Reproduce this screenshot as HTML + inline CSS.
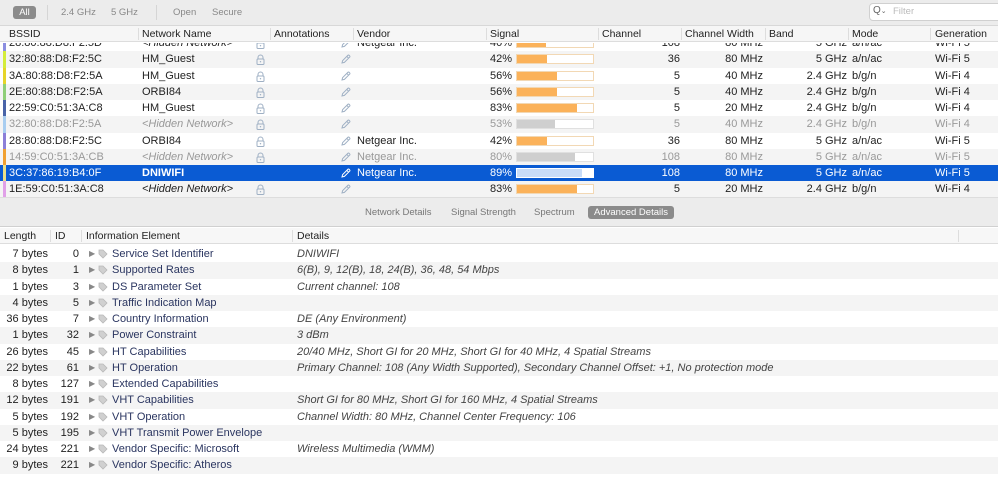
<!DOCTYPE html>
<html><head><meta charset="utf-8"><style>
*{margin:0;padding:0;box-sizing:border-box}
body{width:998px;height:482px;overflow:hidden;background:#fff;font-family:"Liberation Sans",sans-serif;font-size:11px;color:#222;position:relative}
.a{position:absolute;white-space:nowrap}
.tb{left:0;top:0;width:998px;height:26px;background:#ececec;border-bottom:1px solid #d8d8d8}
.hd{height:16px;background:#f6f6f6;border-bottom:1px solid #ddd;width:998px;left:0}
.hc{position:absolute;top:2px;font-size:10.5px;color:#222}
.sep{position:absolute;top:2px;width:1px;height:12px;background:#ddd}
.row{position:absolute;left:0;width:998px;height:16.25px}
.row span{position:absolute;top:2px}
.row svg{position:absolute}
.g{background:#f4f4f4}
.dim{color:#999}
.sel{background:#0a5bd3;color:#fff}
.bar{position:absolute;left:516px;top:3px;width:78px;height:10px;border:1px solid #f2d8b4;background:#fff}
.bar i{display:block;height:100%;background:#fbb25a}
.strip{position:absolute;left:3px;top:0;width:3px;height:100%}
.r{text-align:right}
</style></head><body>
<div class="a tb"></div>
<div class="a" style="left:13px;top:6px;width:23px;height:13px;background:#8b8b8b;border-radius:3px;color:#fff;font-size:9.5px;text-align:center;line-height:13px">All</div>
<div class="a" style="left:47px;top:5px;width:1px;height:15px;background:#d5d5d5"></div>
<div class="a" style="left:61px;top:7px;color:#888;font-size:9.5px">2.4 GHz</div>
<div class="a" style="left:111px;top:7px;color:#888;font-size:9.5px">5 GHz</div>
<div class="a" style="left:156px;top:5px;width:1px;height:15px;background:#d5d5d5"></div>
<div class="a" style="left:173px;top:7px;color:#888;font-size:9.5px">Open</div>
<div class="a" style="left:212px;top:7px;color:#888;font-size:9.5px">Secure</div>
<div class="a" style="left:869px;top:3px;width:135px;height:18px;background:#fff;border:1px solid #d0d0d0;border-radius:4px"></div>
<div class="a" style="left:873px;top:5px;color:#666;font-size:10px">Q<span style="font-size:7px">⌄</span></div>
<div class="a" style="left:893px;top:6px;color:#bbb;font-size:9.5px">Filter</div>

<div class="a hd" style="top:26px">
<span class="hc" style="left:9px">BSSID</span><span class="sep" style="left:138px"></span>
<span class="hc" style="left:142px">Network Name</span><span class="sep" style="left:270px"></span>
<span class="hc" style="left:274px">Annotations</span><span class="sep" style="left:353px"></span>
<span class="hc" style="left:357px">Vendor</span><span class="sep" style="left:486px"></span>
<span class="hc" style="left:490px">Signal</span><span class="sep" style="left:598px"></span>
<span class="hc" style="left:602px">Channel</span><span class="sep" style="left:681px"></span>
<span class="hc" style="left:685px">Channel Width</span><span class="sep" style="left:765px"></span>
<span class="hc" style="left:769px">Band</span><span class="sep" style="left:848px"></span>
<span class="hc" style="left:852px">Mode</span><span class="sep" style="left:930px"></span>
<span class="hc" style="left:935px">Generation</span>
</div>

<div id="top" class="a" style="left:0;top:43px;width:998px;height:154px;overflow:hidden">
<div id="tin" style="position:absolute;left:0;top:-8px;width:998px"></div>
</div>

<div class="a" style="left:0;top:197px;width:998px;height:30px;background:#ececec;border-top:1px solid #ddd;border-bottom:1px solid #d0d0d0"></div>
<div class="a" style="left:365px;top:207px;color:#777;font-size:9.5px">Network Details</div>
<div class="a" style="left:451px;top:207px;color:#777;font-size:9.5px">Signal Strength</div>
<div class="a" style="left:534px;top:207px;color:#777;font-size:9.5px">Spectrum</div>
<div class="a" style="left:588px;top:206px;width:86px;height:13px;background:#8b8b8b;border-radius:3px;color:#fff;font-size:9.5px;text-align:center;line-height:13px">Advanced Details</div>

<div class="a hd" style="top:228px;background:#f7f7f7">
<span class="hc" style="left:4px">Length</span><span class="sep" style="left:50px"></span>
<span class="hc" style="left:55px">ID</span><span class="sep" style="left:81px"></span>
<span class="hc" style="left:86px">Information Element</span><span class="sep" style="left:292px"></span>
<span class="hc" style="left:297px">Details</span><span class="sep" style="left:958px"></span>
</div>
<div id="bot" class="a" style="left:0;top:246px;width:998px;height:236px"></div>

<script>
var T=[
["#8c8ee0","28:80:88:D8:F2:5D","<Hidden Network>","Netgear Inc.",40,"108","80 MHz","5 GHz","a/n/ac","Wi-Fi 5",0],
["#d4ec3a","32:80:88:D8:F2:5C","HM_Guest","",42,"36","80 MHz","5 GHz","a/n/ac","Wi-Fi 5",0],
["#e6d52a","3A:80:88:D8:F2:5A","HM_Guest","",56,"5","40 MHz","2.4 GHz","b/g/n","Wi-Fi 4",0],
["#8fcf78","2E:80:88:D8:F2:5A","ORBI84","",56,"5","40 MHz","2.4 GHz","b/g/n","Wi-Fi 4",0],
["#4a64a8","22:59:C0:51:3A:C8","HM_Guest","",83,"5","20 MHz","2.4 GHz","b/g/n","Wi-Fi 4",0],
["#a8cdf0","32:80:88:D8:F2:5A","<Hidden Network>","",53,"5","40 MHz","2.4 GHz","b/g/n","Wi-Fi 4",1],
["#8c7fd8","28:80:88:D8:F2:5C","ORBI84","Netgear Inc.",42,"36","80 MHz","5 GHz","a/n/ac","Wi-Fi 5",0],
["#f0a030","14:59:C0:51:3A:CB","<Hidden Network>","Netgear Inc.",80,"108","80 MHz","5 GHz","a/n/ac","Wi-Fi 5",1],
["#e8e08a","3C:37:86:19:B4:0F","DNIWIFI","Netgear Inc.",89,"108","80 MHz","5 GHz","a/n/ac","Wi-Fi 5",2],
["#e0a0e8","1E:59:C0:51:3A:C8","<Hidden Network>","",83,"5","20 MHz","2.4 GHz","b/g/n","Wi-Fi 4",0]];
var h='';T.forEach(function(r,i){
var y=(16.25*i)+'px';var cls='row'+(r[10]==2?' sel':(i%2==1?' g':''))+(r[10]==1?' dim':'');
var hid=r[2][0]=='<';var nm=r[2].replace('<','&lt;').replace('>','&gt;');
var fill=r[10]==2?'#c8dcf8':(r[10]==1?'#cfcfcf':'#fbb25a');var bb=r[10]==2?'#fff':(r[10]==1?'#e0e0e0':'#f2d8b4');
var ic=r[10]==2?'#fff':'#9fb0c4';
var lock=r[10]==2?'':'<svg style="left:256px;top:3px" width="9" height="11" viewBox="0 0 9 11"><path d="M2 5V3.5a2.5 2.5 0 0 1 5 0V5" fill="none" stroke="'+ic+'" stroke-width="1"/><rect x="1" y="5" width="7" height="5.5" rx="1" fill="none" stroke="'+ic+'" stroke-width="1"/><circle cx="4.5" cy="7.7" r=".7" fill="'+ic+'"/></svg>';
var pen='<svg style="left:340px;top:3px" width="11" height="11" viewBox="0 0 11 11"><path d="M2 9l.6-2.4L7.8 1.4a1 1 0 0 1 1.4 0l.4.4a1 1 0 0 1 0 1.4L4.4 8.4z M6.8 2.4l1.8 1.8" fill="none" stroke="'+ic+'" stroke-width="1"/></svg>';
h+='<div class="'+cls+'" style="top:'+y+'"><div class="strip" style="background:'+r[0]+'"></div><span style="left:9px">'+r[1]+'</span><span style="left:142px;'+(hid?'font-style:italic;':'')+(r[10]==2?'font-weight:bold;':'')+'">'+nm+'</span>'+lock+pen+'<span style="left:357px">'+r[3]+'</span><span style="left:490px">'+r[4]+'%</span><div class="bar" style="border-color:'+bb+'"><i style="width:'+Math.round(r[4]*0.95)+'%;background:'+fill+'"></i></div><span class="r" style="left:640px;width:40px">'+r[5]+'</span><span class="r" style="left:700px;width:63px">'+r[6]+'</span><span class="r" style="left:780px;width:67px">'+r[7]+'</span><span style="left:852px">'+r[8]+'</span><span style="left:935px">'+r[9]+'</span></div>';});
document.getElementById('tin').innerHTML=h;
var B=[["7 bytes","0","Service Set Identifier","DNIWIFI"],["8 bytes","1","Supported Rates","6(B), 9, 12(B), 18, 24(B), 36, 48, 54 Mbps"],["1 bytes","3","DS Parameter Set","Current channel: 108"],["4 bytes","5","Traffic Indication Map",""],["36 bytes","7","Country Information","DE (Any Environment)"],["1 bytes","32","Power Constraint","3 dBm"],["26 bytes","45","HT Capabilities","20/40 MHz, Short GI for 20 MHz, Short GI for 40 MHz, 4 Spatial Streams"],["22 bytes","61","HT Operation","Primary Channel: 108 (Any Width Supported), Secondary Channel Offset: +1, No protection mode"],["8 bytes","127","Extended Capabilities",""],["12 bytes","191","VHT Capabilities","Short GI for 80 MHz, Short GI for 160 MHz, 4 Spatial Streams"],["5 bytes","192","VHT Operation","Channel Width: 80 MHz, Channel Center Frequency: 106"],["5 bytes","195","VHT Transmit Power Envelope",""],["24 bytes","221","Vendor Specific: Microsoft","Wireless Multimedia (WMM)"],["9 bytes","221","Vendor Specific: Atheros",""]];
h='';B.forEach(function(r,i){h+='<div class="row'+(i%2?' g':'')+'" style="top:'+(16.25*i)+'px"><span class="r" style="left:0;width:48px">'+r[0]+'</span><span class="r" style="left:50px;width:29px">'+r[1]+'</span><span style="left:89px;color:#888;font-size:8px;top:3px">▶</span><svg style="left:98px;top:3px" width="10" height="10" viewBox="0 0 10 10"><path d="M1 1h4l4 4-4 4-4-4z" fill="#d0d0d0" stroke="#b8b8b8" stroke-width=".8"/></svg><span style="left:112px;color:#2a3560">'+r[2]+'</span><span style="left:297px;font-style:italic;color:#444">'+r[3]+'</span></div>';});
document.getElementById('bot').innerHTML=h;
</script>
</body></html>
